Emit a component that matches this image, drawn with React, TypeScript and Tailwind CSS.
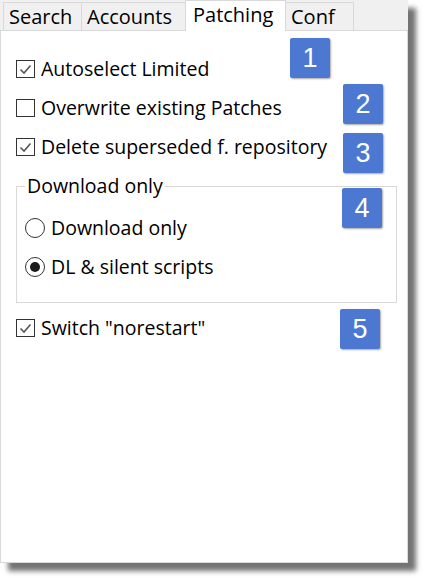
import { ReactNode } from 'react';

const font = { fontFamily: '"Open Sans", "DejaVu Sans", sans-serif' };

function Check({ checked }: { checked: boolean }) {
  return (
    <span className="flex h-[18px] w-[19px] shrink-0 items-center justify-center border border-[#333] bg-white">
      {checked && (
        <svg width="13" height="11" viewBox="0 0 13 11">
          <path d="M1.5 5.5 L5 9 L11.5 1.5" fill="none" stroke="#555" strokeWidth="1.6" />
        </svg>
      )}
    </span>
  );
}

function Radio({ on }: { on: boolean }) {
  return (
    <span className="flex h-[20px] w-[20px] shrink-0 items-center justify-center rounded-full border border-[#333] bg-white">
      {on && <span className="h-[10px] w-[10px] rounded-full bg-[#1a1a1a]" />}
    </span>
  );
}

function Badge({ n, className }: { n: number; className: string }) {
  return (
    <div
      className={`absolute flex h-[40px] w-[40px] items-center justify-center rounded-[2px] bg-[#4d78d2] text-[27px] text-white shadow-[1px_1px_2px_rgba(0,0,0,0.35)] ${className}`}
      style={{ fontFamily: '"Liberation Sans", Arial, sans-serif' }}
    >
      {n}
    </div>
  );
}

function Tab({ children, active, className }: { children: ReactNode; active?: boolean; className: string }) {
  return active ? (
    <div className={`relative z-10 -mb-px flex h-[31px] items-center border border-b-0 border-[#d9d9d9] bg-white px-[7px] pb-[3px] ${className}`}>
      {children}
    </div>
  ) : (
    <div className={`flex h-[28px] items-center border border-b-0 border-[#d9d9d9] bg-[#f0f0f0] px-[5px] ${className}`}>
      {children}
    </div>
  );
}

function CheckRow({ checked, label, className }: { checked: boolean; label: string; className: string }) {
  return (
    <div className={`flex h-[20px] items-center gap-[6px] ${className}`}>
      <Check checked={checked} />
      <span className="leading-none">{label}</span>
    </div>
  );
}

export default function App() {
  return (
    <div className="h-[578px] w-[424px] overflow-hidden bg-white text-black" style={font}>
      <div className="flex h-[563px] w-[408px] flex-col bg-[#f0f0f0] shadow-[8px_8px_5px_rgba(0,0,0,0.55)]">
        {/* tab strip */}
        <div className="flex h-[30px] items-end pl-[3px] text-[20px]">
          <Tab className="w-[78px] border-r-0">Search</Tab>
          <Tab className="w-[104px] border-r-0">Accounts</Tab>
          <Tab active className="w-[101px]">Patching</Tab>
          <Tab className="w-[68px] border-l-0">Conf</Tab>
        </div>

        {/* panel */}
        <div className="relative flex flex-1 flex-col border border-[#d9d9d9] bg-white pl-[15px] text-[19.5px]">
          <CheckRow checked label="Autoselect Limited" className="mt-[28px]" />
          <CheckRow checked={false} label="Overwrite existing Patches" className="mt-[19px]" />
          <CheckRow checked label="Delete superseded f. repository" className="mt-[19px]" />

          <fieldset className="mt-[19px] h-[127px] w-[381px] border border-[#d9d9d9] px-[8px]">
            <legend className="px-[2px] leading-[20px]">Download only</legend>
            <div className="mt-[22px] flex h-[20px] items-center gap-[6px]">
              <Radio on={false} />
              <span className="leading-none">Download only</span>
            </div>
            <div className="mt-[19px] flex h-[20px] items-center gap-[6px]">
              <Radio on />
              <span className="leading-none">DL &amp; silent scripts</span>
            </div>
          </fieldset>

          <CheckRow checked label={'Switch "norestart"'} className="mt-[15px]" />

          <Badge n={1} className="left-[289px] top-[7px]" />
          <Badge n={2} className="left-[342px] top-[53px]" />
          <Badge n={3} className="left-[342px] top-[102px]" />
          <Badge n={4} className="left-[341px] top-[157px]" />
          <Badge n={5} className="left-[339px] top-[278px]" />
        </div>
      </div>
    </div>
  );
}
